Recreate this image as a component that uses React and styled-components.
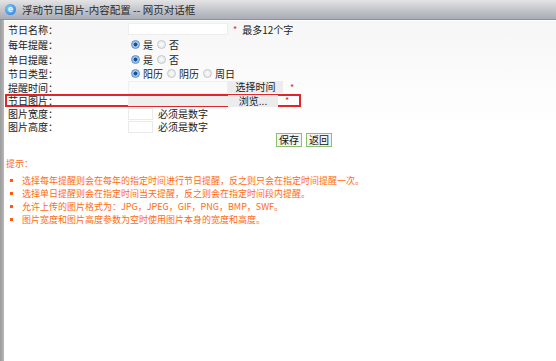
import React from "react";
import styled, { createGlobalStyle } from "styled-components";

const GlobalStyle = createGlobalStyle`
  html, body {
    margin: 0;
    padding: 0;
    background: #fff;
  }
  body {
    font-family: "Noto Sans CJK SC", "Liberation Sans", sans-serif;
  }
`;

const Frame = styled.div`
  width: 556px;
  height: 361px;
  display: flex;
  flex-direction: column;
  overflow: hidden;
`;

const TitleBar = styled.div`
  height: 19px;
  display: flex;
  align-items: center;
  gap: 6px;
  padding-left: 5px;
  background: linear-gradient(180deg, #e4e4e6 0%, #c9cacf 45%, #a9abb6 100%);
  border-bottom: 1px solid #8f9098;
  color: #2a2a2a;
  font-size: 10.5px;
  line-height: 12px;
`;

const IeIcon = styled.span`
  width: 11px;
  height: 11px;
  border-radius: 50%;
  background: radial-gradient(circle at 40% 40%, #8fd0ff, #1a6fd0);
  color: #fff;
  font-family: "Liberation Sans", sans-serif;
  font-size: 9px;
  font-weight: bold;
  line-height: 11px;
  text-align: center;
`;

const Body = styled.div`
  flex: 1;
  display: flex;
`;

const SideEdge = styled.div`
  width: 4px;
  background: linear-gradient(90deg, #9a9a9a, #b8b8b8);
`;

const Content = styled.div`
  flex: 1;
  background: #fff;
  padding-top: 1px;
`;

const Form = styled.div`
  display: flex;
  flex-direction: column;
  background: linear-gradient(180deg, #f6f6f6, #fcfcfc 60%, #fff);
`;

const Row = styled.div`
  display: grid;
  grid-template-columns: 120px 1fr;
  align-items: center;
  box-sizing: border-box;
  height: ${(p) => p.h || 13}px;
  padding-left: 4px;
  font-size: 10px;
  line-height: 11px;
  color: #222;
  ${(p) =>
    p.highlight &&
    `
    width: 296px;
    margin-left: 1px;
    padding-left: 3px;
    box-shadow: inset 0 0 0 2px #e0262b;
  `}
`;

const Label = styled.span`
  white-space: nowrap;
`;

const Field = styled.div`
  display: flex;
  align-items: center;
  white-space: nowrap;
`;

const TextInput = styled.div`
  width: ${(p) => p.w || 100}px;
  height: ${(p) => p.hh || 12}px;
  box-sizing: border-box;
  background: ${(p) => p.bg || "#fff"};
  border: 1px solid ${(p) => p.bd || "#eeeeee"};
`;

const GreyButton = styled.div`
  width: ${(p) => p.w}px;
  height: 12px;
  background: #ececec;
  font-size: 10px;
  line-height: 12px;
  text-align: center;
  color: #222;
`;

const Star = styled.span`
  color: #e3262b;
  font-size: 9px;
  margin-left: ${(p) => p.ml || 5}px;
`;

const Hint = styled.span`
  margin-left: ${(p) => p.ml || 5}px;
  font-size: 10px;
`;

const RadioGroup = styled.div`
  display: flex;
  align-items: center;
  padding-left: 3px;
`;

const Radio = styled.span`
  width: 9px;
  height: 9px;
  border-radius: 50%;
  box-sizing: border-box;
  border: 1px solid ${(p) => (p.checked ? "#5d8fc6" : "#c4c8cc")};
  background: ${(p) =>
    p.checked
      ? "radial-gradient(circle, #1f4f8c 0 1.8px, #9cc3ec 2.2px)"
      : "radial-gradient(circle, #fafafa, #e2e4e6)"};
  margin-right: 3px;
`;

const RadioText = styled.span`
  margin-right: 4px;
`;

const Actions = styled.div`
  display: flex;
  gap: 4px;
  padding-left: 272px;
`;

const ActionButton = styled.div`
  width: 26px;
  height: 14px;
  box-sizing: border-box;
  border: 1px solid #8cc06a;
  background: #f3f3f3;
  font-size: 10px;
  line-height: 12px;
  text-align: center;
  color: #111;
`;

const Tips = styled.div`
  margin-top: 10px;
  padding-left: 2px;
  color: #ff6a10;
  font-size: 9px;
  line-height: 13px;
`;

const TipList = styled.ul`
  list-style: none;
  margin: 0;
  padding: 4px 0 0 4px;
`;

const TipItem = styled.li`
  display: flex;
  align-items: center;
  gap: 9px;
  height: 13px;
  &::before {
    content: "";
    width: 3px;
    height: 3px;
    background: #ff5a10;
  }
`;

function RadioSet({ options, value }) {
  return (
    <RadioGroup>
      {options.map((o) => (
        <React.Fragment key={o}>
          <Radio checked={o === value} />
          <RadioText>{o}</RadioText>
        </React.Fragment>
      ))}
    </RadioGroup>
  );
}

const tips = [
  "选择每年提醒则会在每年的指定时间进行节日提醒，反之则只会在指定时间提醒一次。",
  "选择单日提醒则会在指定时间当天提醒，反之则会在指定时间段内提醒。",
  "允许上传的图片格式为：JPG，JPEG，GIF，PNG，BMP，SWF。",
  "图片宽度和图片高度参数为空时使用图片本身的宽度和高度。",
];

export default function App() {
  return (
    <Frame>
      <GlobalStyle />
      <TitleBar>
        <IeIcon>e</IeIcon>
        浮动节日图片-内容配置 -- 网页对话框
      </TitleBar>
      <Body>
        <SideEdge />
        <Content>
          <Form>
            <Row h={16}>
              <Label>节日名称：</Label>
              <Field>
                <TextInput w={100} />
                <Star>*</Star>
                <Hint ml={5}>最多12个字</Hint>
              </Field>
            </Row>
            <Row h={15}>
              <Label>每年提醒：</Label>
              <RadioSet options={["是", "否"]} value="是" />
            </Row>
            <Row h={15}>
              <Label>单日提醒：</Label>
              <RadioSet options={["是", "否"]} value="是" />
            </Row>
            <Row h={13}>
              <Label>节日类型：</Label>
              <RadioSet options={["阳历", "阴历", "周日"]} value="阳历" />
            </Row>
            <Row h={14}>
              <Label>提醒时间：</Label>
              <Field>
                <TextInput w={100} hh={13} bg="#fbfbfb" bd="#f0f0f0" />
                <GreyButton w={55}>选择时间</GreyButton>
                <Star ml={7}>*</Star>
              </Field>
            </Row>
            <Row h={13} highlight>
              <Label>节日图片：</Label>
              <Field>
                <TextInput w={100} hh={10} bg="#eeeeee" bd="#eeeeee" />
                <GreyButton w={50}>浏览...</GreyButton>
                <Star ml={7}>*</Star>
              </Field>
            </Row>
            <Row h={13}>
              <Label>图片宽度：</Label>
              <Field>
                <TextInput w={25} hh={12} bd="#eaeaea" />
                <Hint ml={5}>必须是数字</Hint>
              </Field>
            </Row>
            <Row h={13}>
              <Label>图片高度：</Label>
              <Field>
                <TextInput w={25} hh={12} bd="#eaeaea" />
                <Hint ml={5}>必须是数字</Hint>
              </Field>
            </Row>
          </Form>
          <Actions>
            <ActionButton>保存</ActionButton>
            <ActionButton>返回</ActionButton>
          </Actions>
          <Tips>
            提示：
            <TipList>
              {tips.map((t) => (
                <TipItem key={t}>{t}</TipItem>
              ))}
            </TipList>
          </Tips>
        </Content>
      </Body>
    </Frame>
  );
}
